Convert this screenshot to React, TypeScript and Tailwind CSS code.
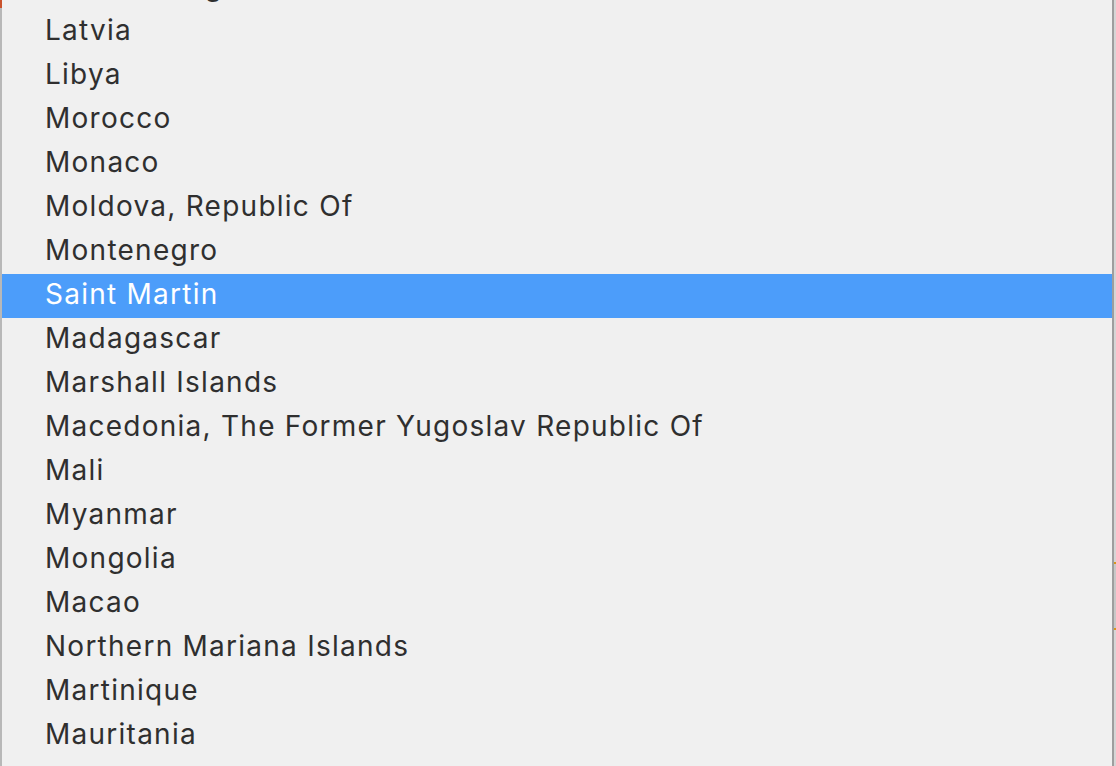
import React from "react";

const items = [
  "Luxembourg",
  "Latvia",
  "Libya",
  "Morocco",
  "Monaco",
  "Moldova, Republic Of",
  "Montenegro",
  "Saint Martin",
  "Madagascar",
  "Marshall Islands",
  "Macedonia, The Former Yugoslav Republic Of",
  "Mali",
  "Myanmar",
  "Mongolia",
  "Macao",
  "Northern Mariana Islands",
  "Martinique",
  "Mauritania",
  "Montserrat",
];

export default function App() {
  return (
    <div className="w-[1116px] h-[766px] overflow-hidden flex bg-[#f0f0f0]">
      <div className="w-[2px] flex flex-col shrink-0">
        <div className="h-[8px] bg-[#c9522c]" />
        <div className="flex-1 bg-[#b8b8b8]" />
      </div>
      <div className="flex-1 overflow-hidden">
        <ul
          className="-mt-[34px] text-[28px] tracking-[1.25px] text-[#2f2f2f]"
          style={{ fontFamily: "Inter, 'Noto Sans', sans-serif" }}
        >
          {items.map((name) => {
            const selected = name === "Saint Martin";
            return (
              <li
                key={name}
                className={
                  selected
                    ? "h-[44px] flex items-center pl-[43px] pb-[4px] bg-[#4c9dfa] text-white"
                    : "h-[44px] flex items-center pl-[43px] pb-[4px]"
                }
              >
                {name}
              </li>
            );
          })}
        </ul>
      </div>
      <div className="w-[2px] shrink-0 bg-[#9e9e9e]" />
      <div className="w-[2px] shrink-0 flex flex-col bg-[#d6d6d6]">
        <div className="h-[562px]" />
        <div className="h-[2px] bg-[#d9951c]" />
        <div className="h-[64px] bg-[#c8c8c8]" />
        <div className="h-[2px] bg-[#d9951c]" />
      </div>
    </div>
  );
}
